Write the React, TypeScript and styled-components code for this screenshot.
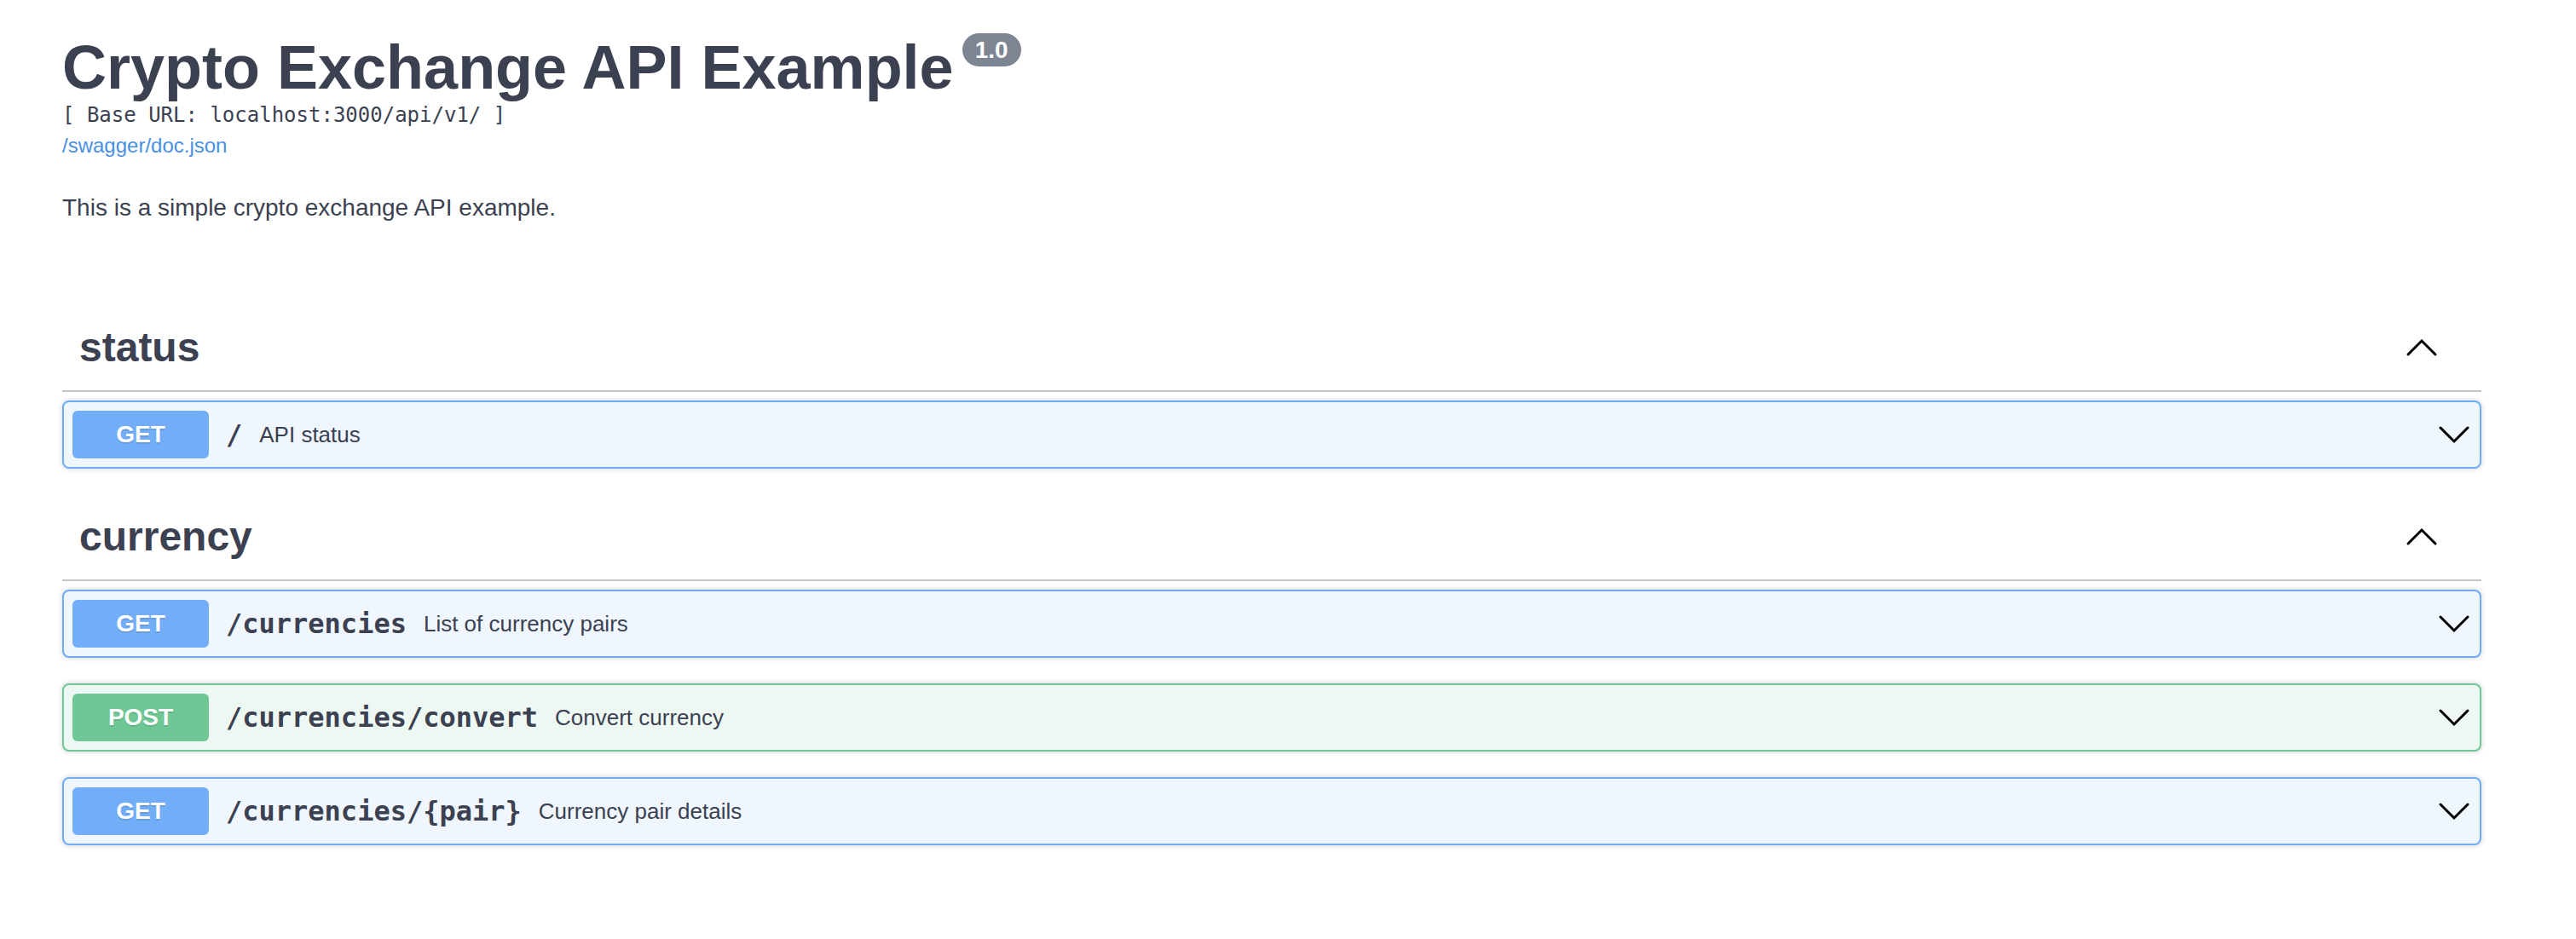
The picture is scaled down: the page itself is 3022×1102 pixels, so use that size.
import React from "react";
import styled, { createGlobalStyle } from "styled-components";

const colors = {
  text: "#3b4151",
  link: "#4990e2",
  badge: "#7d8492",
  rule: "#c4c6cb",
};

const methods = {
  GET: { solid: "#72adf7", border: "#6fadf6", bg: "#eff6fe" },
  POST: { solid: "#6ec794", border: "#6fc894", bg: "#eef8f3" },
};

type Method = keyof typeof methods;

type Operation = {
  method: Method;
  path: string;
  summary: string;
};

type Tag = {
  name: string;
  operations: Operation[];
};

const tags: Tag[] = [
  {
    name: "status",
    operations: [{ method: "GET", path: "/", summary: "API status" }],
  },
  {
    name: "currency",
    operations: [
      { method: "GET", path: "/currencies", summary: "List of currency pairs" },
      { method: "POST", path: "/currencies/convert", summary: "Convert currency" },
      { method: "GET", path: "/currencies/{pair}", summary: "Currency pair details" },
    ],
  },
];

const GlobalStyle = createGlobalStyle`
  html, body {
    margin: 0;
    padding: 0;
    background: #ffffff;
  }

  body {
    font-family: "Liberation Sans", Arial, sans-serif;
    color: ${colors.text};
  }
`;

const Page = styled.div`
  width: 2838px;
  padding: 39px 0 60px 73px;
`;

const Info = styled.div`
  display: flex;
  flex-direction: column;
  align-items: flex-start;
  margin-bottom: 94px;
`;

const TitleRow = styled.div`
  display: flex;
  align-items: flex-start;
`;

const Title = styled.h2`
  margin: 0;
  font-size: 72px;
  line-height: 80px;
  font-weight: 700;
  color: ${colors.text};
`;

const Version = styled.span`
  margin: 0 0 0 10px;
  padding: 4px 15px;
  border-radius: 57px;
  background: ${colors.badge};
  color: #ffffff;
  font-size: 28px;
  line-height: 31px;
  font-weight: 700;
`;

const BaseUrl = styled.pre`
  margin: 2px 0 0;
  font-family: "DejaVu Sans Mono", "Liberation Mono", monospace;
  font-size: 24px;
  line-height: 28px;
  color: ${colors.text};
`;

const SpecLink = styled.a`
  margin-top: 8px;
  font-size: 24px;
  line-height: 28px;
  color: ${colors.link};
  text-decoration: none;
`;

const Description = styled.p`
  margin: 39px 0 0;
  font-size: 28px;
  line-height: 40px;
  color: ${colors.text};
`;

const TagSection = styled.section`
  display: flex;
  flex-direction: column;
`;

const TagHeader = styled.h3`
  display: flex;
  align-items: center;
  height: 60px;
  margin: 0 0 10px;
  padding: 20px;
  border-bottom: 2px solid ${colors.rule};
  font-size: 48px;
  line-height: 60px;
  font-weight: 700;
  color: ${colors.text};
`;

const TagName = styled.span`
  flex: 1;
`;

const ToggleButton = styled.button`
  display: flex;
  align-items: center;
  justify-content: center;
  margin: 0 30px 0 0;
  padding: 0;
  border: none;
  background: none;
  cursor: pointer;
`;

const Block = styled.div<{ $method: Method }>`
  margin-bottom: 30px;
  border: 2px solid ${(p) => methods[p.$method].border};
  border-radius: 8px;
  background: ${(p) => methods[p.$method].bg};
  box-shadow: 0 0 6px rgba(0, 0, 0, 0.19);
`;

const Summary = styled.div`
  display: flex;
  align-items: center;
  padding: 10px;
`;

const MethodBadge = styled.span<{ $method: Method }>`
  min-width: 160px;
  padding: 12px 0;
  border-radius: 6px;
  background: ${(p) => methods[p.$method].solid};
  color: #ffffff;
  font-size: 28px;
  line-height: 32px;
  font-weight: 700;
  text-align: center;
  text-shadow: 0 2px 0 rgba(0, 0, 0, 0.1);
`;

const Path = styled.span`
  padding: 0 20px;
  font-family: "DejaVu Sans Mono", "Liberation Mono", monospace;
  font-size: 32px;
  font-weight: 700;
  color: ${colors.text};
`;

const SummaryText = styled.span`
  flex: 1;
  font-size: 26px;
  color: ${colors.text};
`;

const Chevron: React.FC<{ up?: boolean }> = ({ up }) => (
  <svg width="40" height="40" viewBox="0 0 40 40" fill="none">
    <polyline
      points={up ? "4,28 20,12 36,28" : "4,12 20,28 36,12"}
      stroke="#000000"
      strokeWidth="3"
      strokeLinecap="round"
      strokeLinejoin="miter"
    />
  </svg>
);

const OperationRow: React.FC<{ op: Operation }> = ({ op }) => (
  <Block $method={op.method}>
    <Summary>
      <MethodBadge $method={op.method}>{op.method}</MethodBadge>
      <Path>{op.path}</Path>
      <SummaryText>{op.summary}</SummaryText>
      <Chevron />
    </Summary>
  </Block>
);

export default function App() {
  return (
    <>
      <GlobalStyle />
      <Page>
        <Info>
          <TitleRow>
            <Title>Crypto Exchange API Example</Title>
            <Version>1.0</Version>
          </TitleRow>
          <BaseUrl>[ Base URL: localhost:3000/api/v1/ ]</BaseUrl>
          <SpecLink href="#">/swagger/doc.json</SpecLink>
          <Description>This is a simple crypto exchange API example.</Description>
        </Info>
        {tags.map((tag) => (
          <TagSection key={tag.name}>
            <TagHeader>
              <TagName>{tag.name}</TagName>
              <ToggleButton aria-label="collapse">
                <Chevron up />
              </ToggleButton>
            </TagHeader>
            {tag.operations.map((op) => (
              <OperationRow key={op.method + op.path} op={op} />
            ))}
          </TagSection>
        ))}
      </Page>
    </>
  );
}
